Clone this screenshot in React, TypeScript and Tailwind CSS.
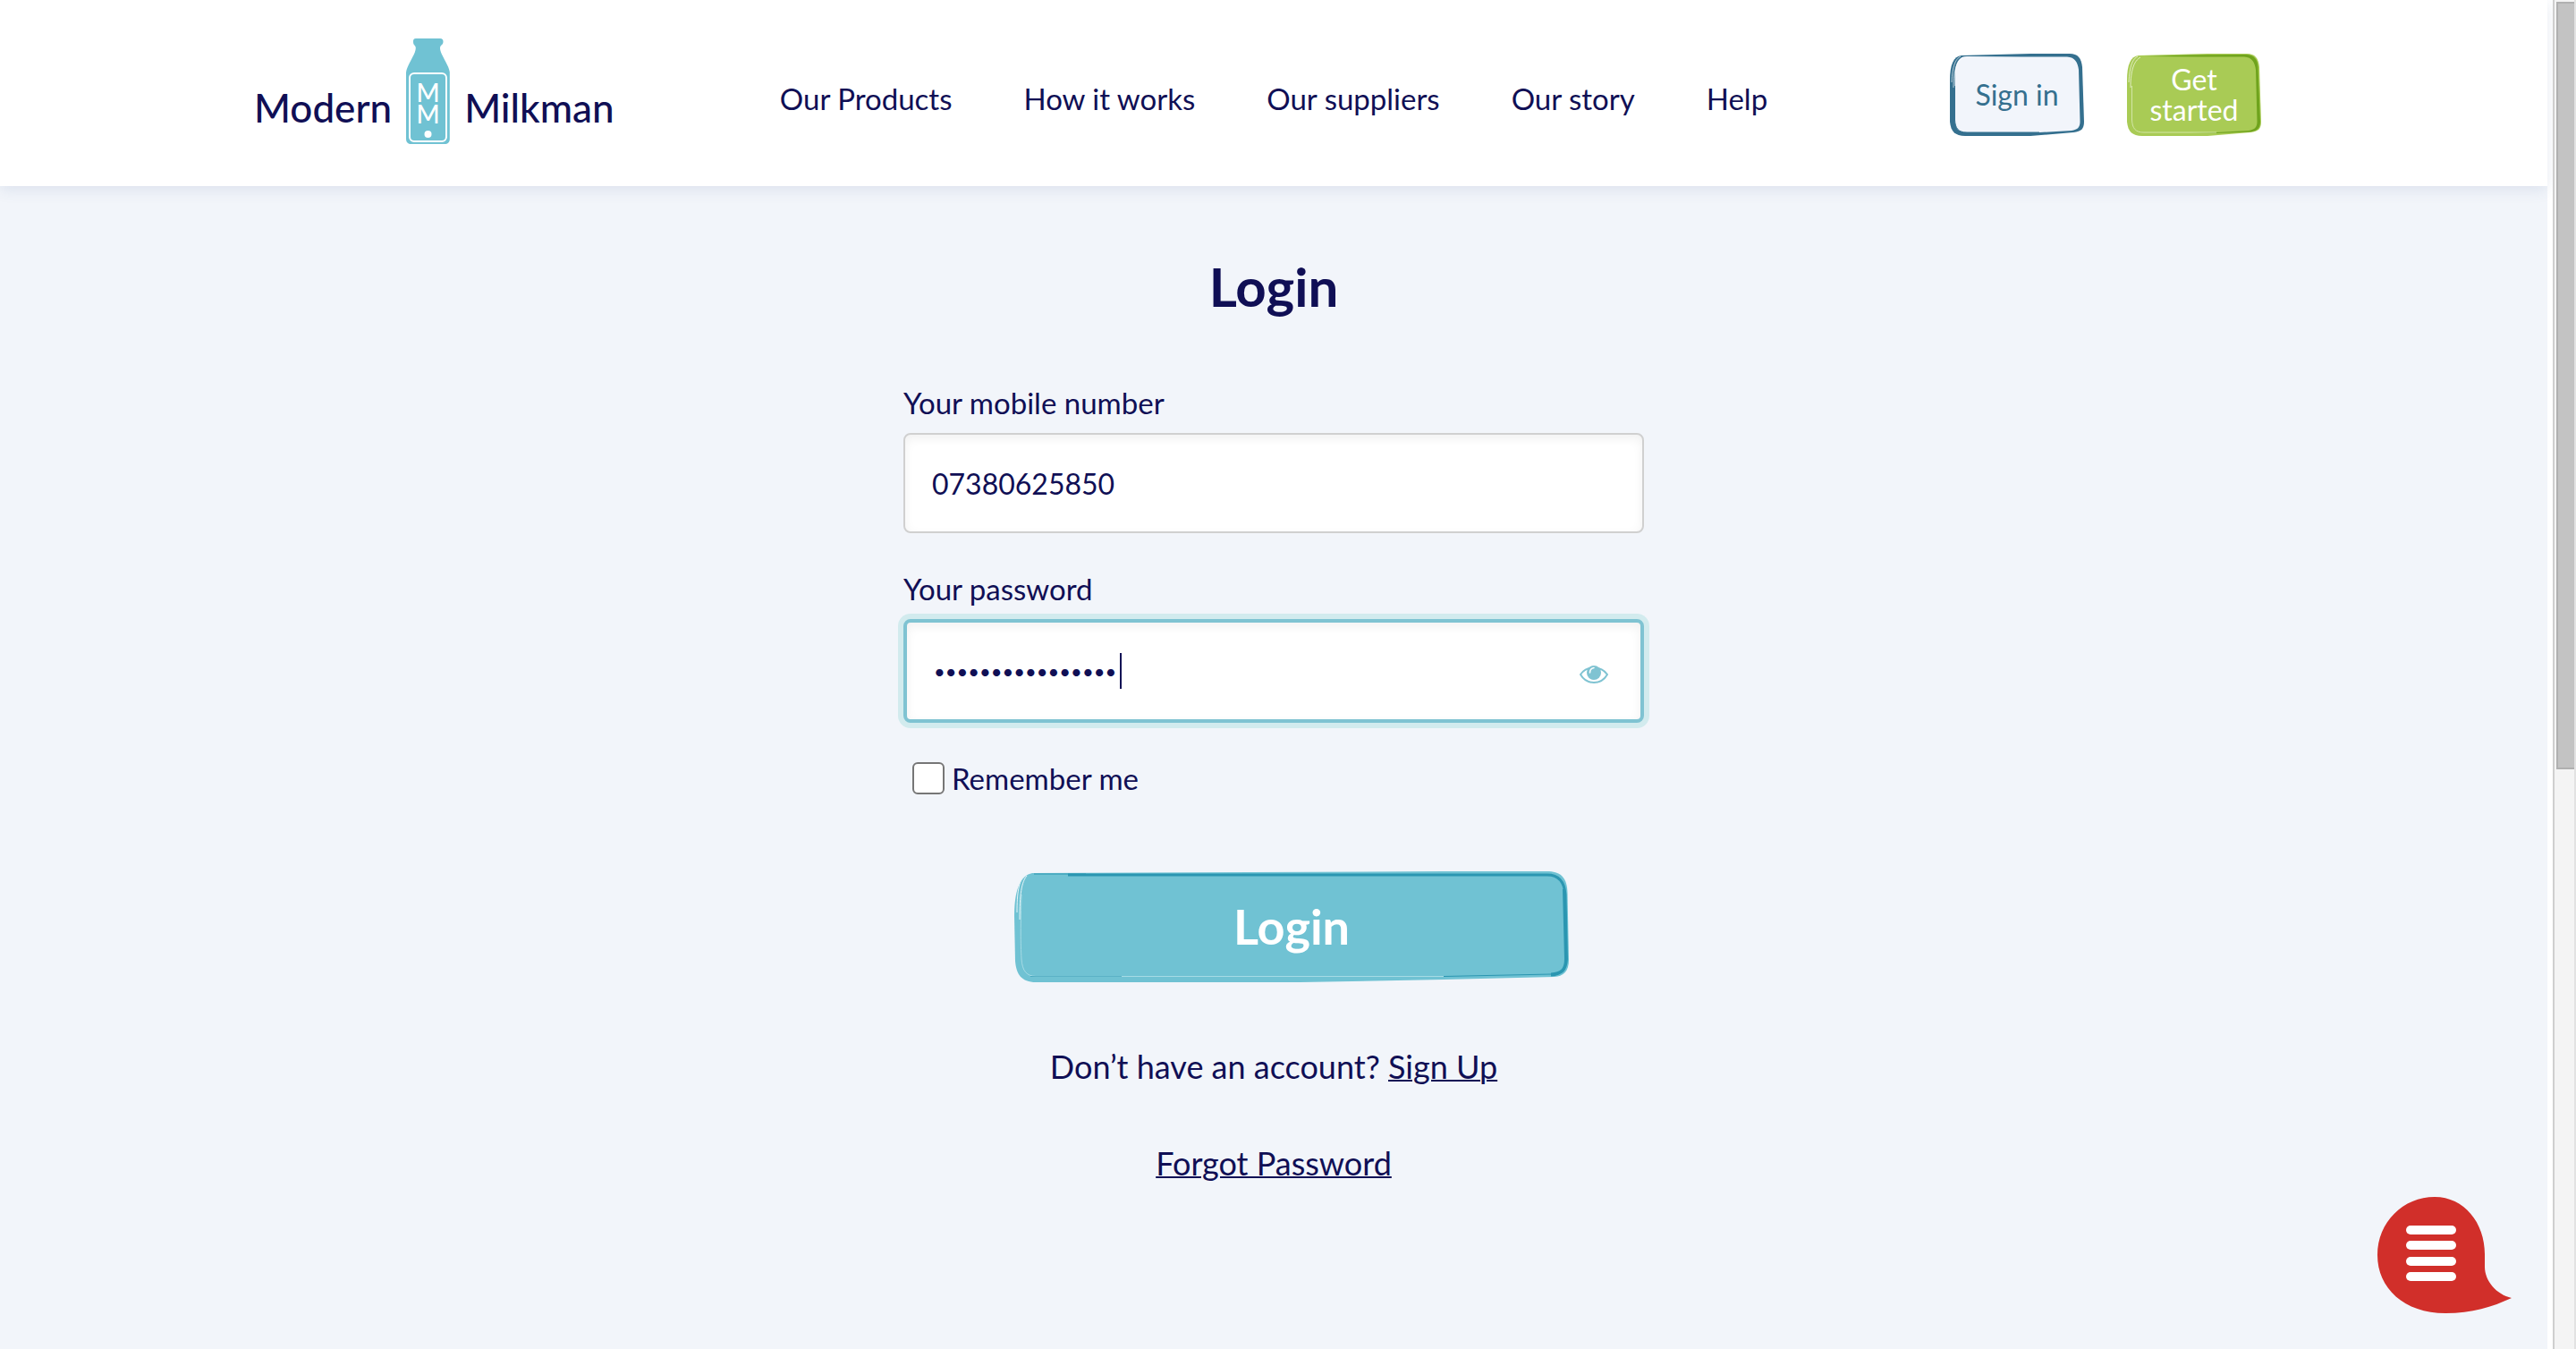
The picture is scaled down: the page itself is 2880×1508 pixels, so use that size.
import { useState } from "react";

const navLinks = ["Our Products", "How it works", "Our suppliers", "Our story", "Help"];

function Bottle() {
  return (
    <svg viewBox="0 0 49 118" className="h-[118px] w-[49px] shrink-0" aria-hidden="true">
      <path
        fill="#70c2d3"
        d="M11 0h27c2.500 0 3.500 1.500 3.500 3.500 0 2.500-1 3-2.500 4.500-1.500 1.500-1.200 4 0 7.500 2 5.500 9 15.500 9.800 22V112c0 4-2 6-6 6H6c-4 0-6-2-6-6V38c.8-7 7.500-16.500 9.800-22.500 1.200-3.500 1.500-6 0-7.500C8.500 6.500 8 6 8 3.500 8 1.500 8.500 0 11 0z"
      />
      <rect x="4" y="39" width="41" height="76" rx="5" fill="none" stroke="#fff" strokeWidth="2" />
      <circle cx="24.500" cy="107" r="4" fill="#fff" />
      <text x="24.500" y="71" textAnchor="middle" fill="#fff" fontFamily="Lato, sans-serif" fontSize="28">M</text>
      <text x="24.500" y="95" textAnchor="middle" fill="#fff" fontFamily="Lato, sans-serif" fontSize="28">M</text>
    </svg>
  );
}

type SketchProps = { fill: string; edge: string; dark: string; glint: string };

function SmallSketch({ fill, edge, dark, glint }: SketchProps) {
  return (
    <svg viewBox="0 0 150 92" preserveAspectRatio="none" className="absolute inset-0 size-full" aria-hidden="true">
      <path fill={edge} d="M13 2L90 0H134C143 0 147 5 148 15L150 76C150 84 147 87 138 88L90 92H17C6 92 1 87 0 76V30C0 12 4 3 13 2z" />
      <path fill={dark} d="M19 3L70 1.500 133 1C142 1 146 6 146.500 15L149 76C149 84 145 87 136 87.500L100 89 70 88 15 88 8 70 6 20z" />
      <path fill={fill} d="M19 3L80 3.500H131C140 4 143 10 144 18L145.500 76C145.500 82 143 85 136 86L100 88H19C9 88 6 83 5.500 74V24C6 10 10 3 19 3z" />
      <path d="M5.500 36V74C6 83 9 88 19 88H100" fill="none" stroke={glint} strokeWidth="1" />
      <path d="M2 32C3 14 6 6 12 3M4 38C4 18 8 8 15 4" fill="none" stroke="#fff" strokeWidth="0.800" opacity="0.8" />
    </svg>
  );
}

function WideSketch() {
  return (
    <svg viewBox="0 0 620 124" preserveAspectRatio="none" className="absolute inset-0 size-full" aria-hidden="true">
      <path fill="#70c2d3" d="M20 2L480 0H598C612 1 618 8 618.500 24L620 99C620 112 614 117 604 118L480 121 320 124H24C8 124 2 115 1 100L0 50C0 22 6 5 20 2z" />
      <path fill="none" stroke="#2b96b1" strokeWidth="3" d="M60 4H596C609 4 615 12 616 26L617.500 98C617 110 612 115 600 116" />
      <path fill="none" stroke="#2b96b1" strokeWidth="1" d="M22 3H80" />
      <path fill="none" stroke="#2b96b1" strokeWidth="2" d="M614 20L616 98C616 110 611 114 600 114.500" />
      <path fill="none" stroke="#2b96b1" strokeWidth="1" d="M600 115L480 117.500" />
      <path fill="none" stroke="#a5dbe5" strokeWidth="1" d="M8 26C7 60 7 80 8 98C9 112 14 117 24 117.500H480" />
      <path fill="none" stroke="#2b96b1" strokeWidth="1" d="M18 117.500H120" opacity="0.6" />
      <path fill="none" stroke="#e6f5f8" strokeWidth="1" d="M3 46C3 24 5 11 11 5M6 54C6 26 8 12 14 5" />
    </svg>
  );
}

function EyeIcon() {
  return (
    <svg viewBox="0 0 32 22" className="h-[22px] w-8" aria-hidden="true">
      <path d="M1 11C8 1 24 1 31 11 24 23 8 23 1 11z" fill="#fff" stroke="#7fc3d2" strokeWidth="2" />
      <circle cx="16" cy="9" r="8" fill="#7fc3d2" />
      <path d="M11.500 9c0-3 1.500-5 4.500-5.500" fill="none" stroke="#fff" strokeWidth="1.500" strokeLinecap="round" />
    </svg>
  );
}

export default function App() {
  const [mobile, setMobile] = useState("07380625850");
  const [password, setPassword] = useState("milkman-password");
  const [visible, setVisible] = useState(false);

  return (
    <div className="flex min-h-screen bg-white font-['Lato',sans-serif] text-[33px] leading-10 text-[#100f55]">
      <div className="flex min-w-0 flex-1 flex-col bg-[#f2f5fa]">
        <header className="bg-white shadow-[0_4px_16px_rgba(60,90,150,0.12)]">
          <div className="mx-auto grid h-52 max-w-[2280px] grid-cols-[1fr_auto_1fr] items-center">
            <a href="#home" className="flex items-center gap-4 pb-1 text-[44px] font-medium leading-[56px]">
              <span className="pt-9">Modern</span>
              <Bottle />
              <span className="pt-9">Milkman</span>
            </a>
            <nav className="flex gap-20 pt-3">
              {navLinks.map((label) => (
                <a key={label} href="#nav">{label}</a>
              ))}
            </nav>
            <div className="flex justify-end gap-12 pr-9 pt-1 text-[32px] leading-[34px]">
              <a href="#signin" className="relative flex h-[92px] w-[150px] items-center justify-center text-[#35708f]">
                <SmallSketch fill="#f2f5fb" edge="#35708f" dark="#35708f" glint="#35708f" />
                <span className="relative">Sign in</span>
              </a>
              <a href="#start" className="relative flex h-[92px] w-[150px] items-center justify-center text-center text-white">
                <SmallSketch fill="#a9cb55" edge="#a9cb55" dark="#6fa31d" glint="#d3e6a6" />
                <span className="relative">Get<br />started</span>
              </a>
            </div>
          </div>
        </header>

        <main className="mx-auto flex w-full max-w-[828px] flex-col pt-[72px]">
          <h1 className="text-center text-[60px] font-bold leading-[80px]">Login</h1>
          <form className="flex flex-col" onSubmit={(e) => e.preventDefault()}>
            <label htmlFor="mobile" className="mt-[70px]">Your mobile number</label>
            <input
              id="mobile"
              type="tel"
              value={mobile}
              onChange={(e) => setMobile(e.target.value)}
              className="mt-3.5 h-28 w-full rounded-lg border-2 border-[#d0d0d0] bg-white px-[30px] text-[32px] shadow-[inset_0_4px_12px_rgba(0,0,0,0.06)] outline-none"
            />
            <label htmlFor="password" className="mt-[42px]">Your password</label>
            <div className="relative mt-3.5">
              <input
                id="password"
                type={visible ? "text" : "password"}
                value={password}
                onChange={(e) => setPassword(e.target.value)}
                className="h-[116px] w-full rounded-lg border-4 border-[#7fc3d2] bg-white px-[30px] text-[22px] shadow-[0_0_0_6px_#d2ebee,inset_0_4px_12px_rgba(0,0,0,0.06)] outline-none"
              />
              <span className="absolute left-[242px] top-[38px] h-10 w-0.5 bg-[#100f55]" />
              <button
                type="button"
                aria-label="Show password"
                onClick={() => setVisible(!visible)}
                className="absolute right-10 top-[51px]"
              >
                <EyeIcon />
              </button>
            </div>
            <label className="mt-[42px] flex items-center gap-2 pl-2.5">
              <input type="checkbox" className="size-9 appearance-none rounded-md border-2 border-[#767676] bg-white" />
              Remember me
            </label>
            <div className="mt-[84px] flex justify-center pl-10">
              <button type="submit" className="relative h-[124px] w-[620px] text-[54px] font-bold leading-[64px] text-white">
                <WideSketch />
                <span className="relative">Login</span>
              </button>
            </div>
          </form>
          <p className="mt-[74px] text-center text-[36px]">
            Don’t have an account? <a href="#signup" className="underline decoration-2">Sign Up</a>
          </p>
          <p className="mt-[68px] text-center text-[36px]">
            <a href="#forgot" className="underline decoration-2">Forgot Password</a>
          </p>
        </main>

        <button type="button" aria-label="Open chat" className="fixed bottom-10 right-[72px]">
          <svg viewBox="0 0 150 130" className="h-[130px] w-[150px]" aria-hidden="true">
            <path fill="#d12f2a" d="M64 0C97 0 120 29 120 64V78C120 94 133 109 150 113 128 123 106 130 76 130 30 130 0 102 0 65 0 28 29 0 64 0z" />
            <g fill="#fff">
              <rect x="32" y="32" width="56" height="10" rx="5" />
              <rect x="32" y="49" width="56" height="10" rx="5" />
              <rect x="32" y="67" width="56" height="10" rx="5" />
              <rect x="32" y="84" width="56" height="10" rx="5" />
            </g>
          </svg>
        </button>
      </div>
      <div className="sticky top-0 ml-1.5 h-screen w-[26px] shrink-0 border-l-2 border-r-2 border-l-[#cfcfcf] border-r-[#e2e2e2] bg-[#f4f4f4] pl-0.5 pt-0.5" aria-hidden="true">
        <div className="h-[57%] border-2 border-r-0 border-[#b0b0b0] bg-[#c3c3c3]" />
      </div>
    </div>
  );
}
